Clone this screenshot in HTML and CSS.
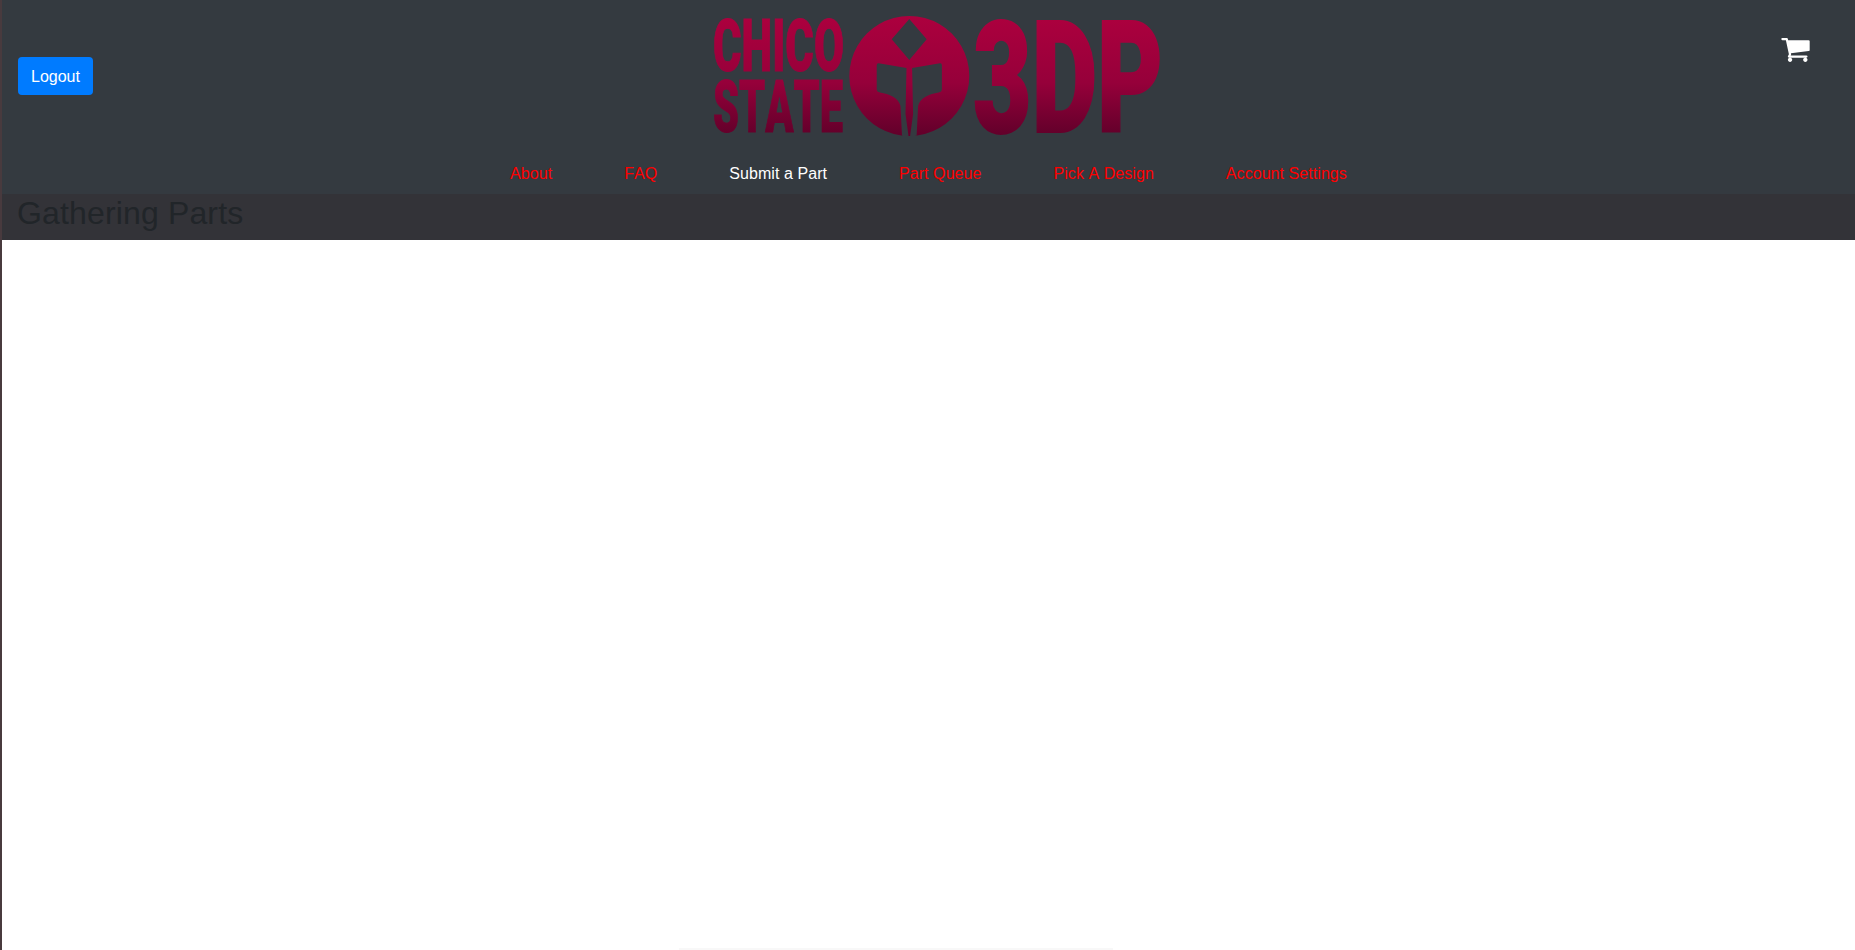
FILE: index.html
```html
<!DOCTYPE html>
<html lang="en">
<head>
    <meta charset="UTF-8">
    <meta name="viewport" content="width=device-width, initial-scale=1.0">
    <title>Chico State 3DP</title>
    <link rel="stylesheet" href="styles.css">
</head>
<body>
    <div class="page">
        <header class="site-header">
            <div class="top-row">
                <div class="logout-cell">
                    <button class="btn-logout" type="button">Logout</button>
                </div>
                <a class="logo" href="#">
                    <svg width="450" height="125" viewBox="0 0 450 125">
                        <defs>
                            <linearGradient id="logoFill" gradientUnits="userSpaceOnUse" x1="0" y1="0" x2="0" y2="125">
                                <stop offset="0" stop-color="#ad003e"/>
                                <stop offset="0.55" stop-color="#96003a"/>
                                <stop offset="1" stop-color="#5e0029"/>
                            </linearGradient>
                        </defs>
                        <text class="logo-small" x="0" y="57" textLength="131" lengthAdjust="spacingAndGlyphs">CHICO</text>
                        <text class="logo-small" x="0" y="118" textLength="130" lengthAdjust="spacingAndGlyphs">STATE</text>
                        <path class="logo-mark" fill-rule="evenodd" d="M196.3 2a60 60 0 1 0 0.01 0z
                            M196.3 5L213.7 25.3L196.3 46L178.7 25.3z
                            M165.7 49.3L193.5 54L192.5 100L195.500 122L189 121.500L187.500 92C186 84 176 80 167 78.500Q163.700 78 163.700 75L163.700 51.300Q163.700 49 165.700 49.300z
                            M226.900 49.300L199.100 54L200.100 100L197.100 122L203.600 121.500L205.100 92C206.600 84 216.600 80 225.600 78.500Q228.900 78 228.900 75L228.900 51.300Q228.900 49 226.900 49.300z"/>
                        <text class="logo-big" x="260" y="118" textLength="190" lengthAdjust="spacingAndGlyphs">3DP</text>
                    </svg>
                </a>
                <a class="cart" href="#">
                    <svg width="29" height="24" viewBox="64 256 1664 1408">
                        <path fill="#fff" d="M704 1536q0 52-38 90t-90 38-90-38-38-90 38-90 90-38 90 38 38 90zm896 0q0 52-38 90t-90 38-90-38-38-90 38-90 90-38 90 38 38 90zm128-1088v512q0 24-16.500 42.500t-40.500 21.500l-1044 122q13 60 13 70 0 16-24 64h920q26 0 45 19t19 45-19 45-45 19h-1024q-26 0-45-19t-19-45q0-11 8-31.500t16-36 21.500-40 15.500-29.500l-177-823h-204q-26 0-45-19t-19-45 19-45 45-19h256q16 0 28.500 6.500t19.500 15.500 13 24.500 8 26 5.500 29.500 4.500 26h1201q26 0 45 19t19 45z"/>
                    </svg>
                </a>
            </div>
            <nav class="main-nav">
                <a href="#">About</a>
                <a href="#">FAQ</a>
                <a class="active" href="#">Submit a Part</a>
                <a href="#">Part Queue</a>
                <a href="#">Pick A Design</a>
                <a href="#">Account Settings</a>
            </nav>
        </header>

        <div class="title-bar">
            <h2>Gathering Parts</h2>
        </div>

        <main class="content">
            <div class="bottom-card"></div>
        </main>
    </div>
</body>
</html>
```

FILE: styles.css
```css
html, body {
    height: 100%;
}

body {
    font-family: "Liberation Sans", Arial, sans-serif;
    font-size: 16px;
    font-kerning: none;
    margin: 0;
    padding: 0;
    background-color: #483a3e;
    color: #212529;
    overflow: hidden;
}

.page {
    margin-left: 2px;
    height: 950px;
    background: #fff;
    overflow: hidden;
}

.site-header {
    background-color: #343a40;
}

.top-row {
    display: grid;
    grid-template-columns: 1fr auto 1fr;
    height: 152px;
}

.logout-cell {
    display: flex;
    align-items: center;
    padding-left: 16px;
}

.btn-logout {
    font-family: inherit;
    font-size: 16px;
    line-height: 24px;
    height: 38px;
    padding: 8px 13px 6px;
    color: #fff;
    background-color: #007bff;
    border: none;
    border-radius: 4px;
    cursor: pointer;
}

.logo {
    display: block;
    padding: 14px 0 0 18px;
}

.logo svg {
    display: block;
}

.logo-small,
.logo-big {
    font-family: Roboto, "Liberation Sans", sans-serif;
    font-weight: 900;
    fill: url(#logoFill);
    stroke: url(#logoFill);
    stroke-linejoin: miter;
}

.logo-small {
    font-size: 73px;
    stroke-width: 1px;
}

.logo-big {
    font-size: 156px;
    stroke-width: 2px;
}

.logo-mark {
    fill: url(#logoFill);
}

.cart {
    justify-self: end;
    padding: 38px 45px 0 0;
}

.cart svg {
    display: block;
}

.main-nav {
    display: flex;
    justify-content: center;
    height: 42px;
}

.main-nav a {
    padding: 10px 36px 8px;
    line-height: 24px;
    letter-spacing: 0.06px;
    color: #f00;
    text-decoration: none;
}

.main-nav a.active {
    color: #fff;
}

.title-bar {
    background-color: #333338;
    height: 46px;
    padding-left: 15px;
}

.title-bar h2 {
    margin: 0;
    font-size: 32px;
    font-weight: 500;
    line-height: 38px;
    letter-spacing: 0.15px;
}

.content {
    height: 710px;
}

.bottom-card {
    width: 434px;
    height: 2px;
    margin: 708px auto 0;
    transform: translateX(-33px);
    background: #f8f8f8;
}
```
